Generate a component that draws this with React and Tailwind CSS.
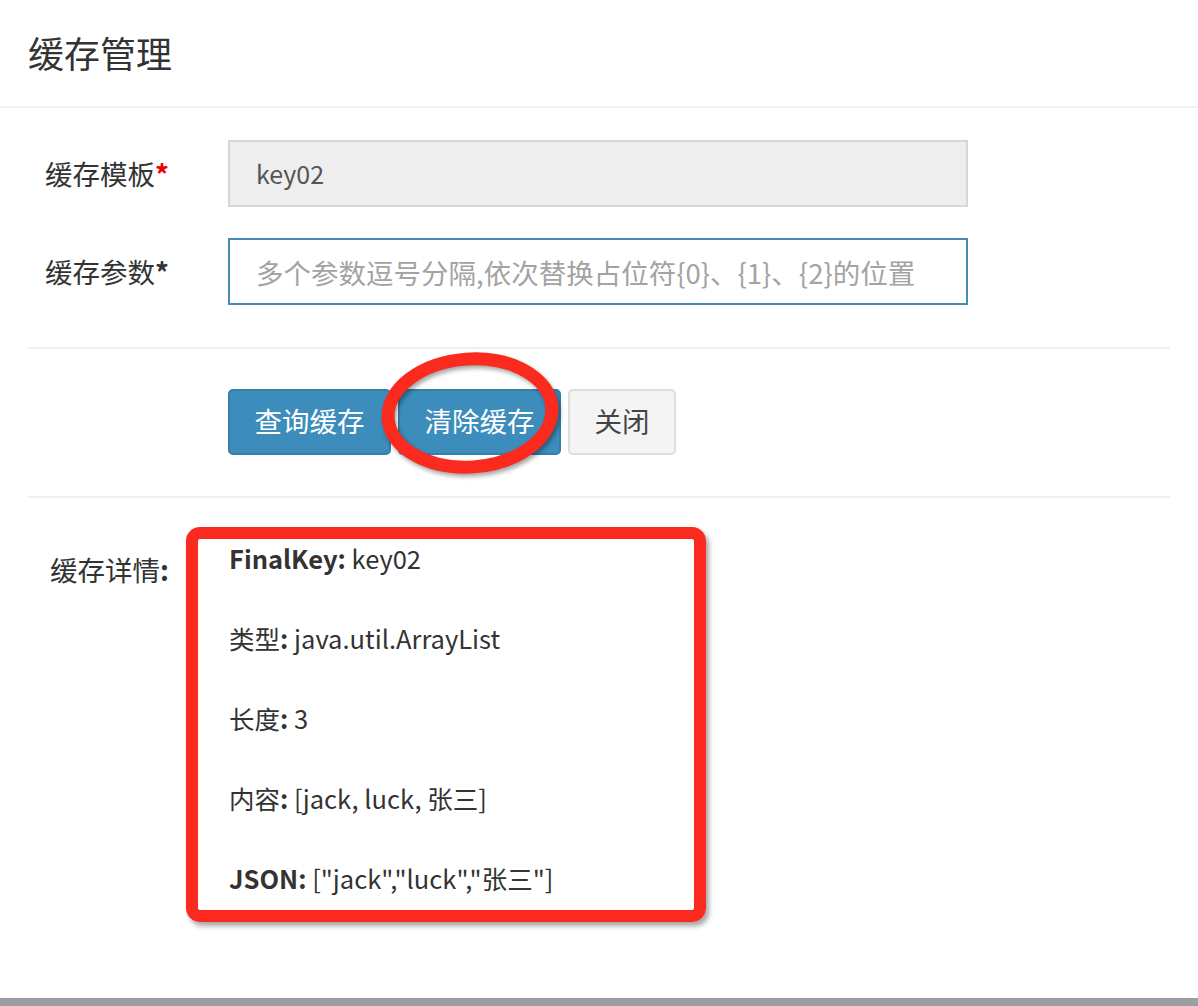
import React from 'react';

const font = { fontFamily: '"Noto Sans CJK SC", "Noto Sans", sans-serif' };

function FormRow({ label, star, children }) {
  return (
    <div className="flex items-center">
      <label className="w-[141px] text-right text-[27.5px] font-normal text-[#333] shrink-0">
        {label}
        <span className={star ? 'text-[#e00] font-bold' : 'text-[#333] font-bold'}>*</span>
      </label>
      <div className="ml-[59px]">{children}</div>
    </div>
  );
}

// CJK keys render at regular weight in the reference, only latin + colon are bold
function Detail({ k, v, cjk }) {
  return (
    <p className="text-[25.5px] leading-[37px] text-[#333]">
      <span className={cjk ? 'font-normal' : 'font-bold'}>{k}</span>
      <b className="font-bold">:</b> {v}
    </p>
  );
}

export default function App() {
  return (
    <div className="relative w-full min-h-[1006px] bg-white overflow-hidden" style={font}>
      {/* header */}
      <div className="h-[108px] border-b-2 border-[#f2f2f2] px-[28px] flex items-center">
        <h1 className="text-[36px] text-[#333] font-normal leading-none -mt-[2px]">缓存管理</h1>
      </div>

      <div className="px-[28px]">
        {/* inputs */}
        <div className="pt-[32px] flex flex-col gap-[31px]">
          <FormRow label="缓存模板" star>
            <div className="w-[740px] h-[67px] bg-[#eeeeee] border-2 border-[#d2d6de] flex items-center px-[26px] text-[25px] text-[#555]">
              key02
            </div>
          </FormRow>
          <FormRow label="缓存参数">
            <input
              className="w-[740px] h-[67px] border-2 border-[#4a8bb5] px-[26px] text-[27.5px] text-[#555] placeholder:text-[#a3a3a3] outline-none"
              placeholder="多个参数逗号分隔,依次替换占位符{0}、{1}、{2}的位置"
            />
          </FormRow>
        </div>

        <div className="mt-[42px] border-t-2 border-[#f0f0f0]" />

        {/* buttons */}
        <div className="pt-[40px] pb-[41px] pl-[200px] flex gap-[7px]">
          <button className="w-[163px] h-[66px] rounded-[5px] bg-[#3c8dbc] border-2 border-[#367fa9] text-white text-[27.5px] leading-none pb-[3px]">
            查询缓存
          </button>
          <button className="w-[163px] h-[66px] rounded-[5px] bg-[#3c8dbc] border-2 border-[#367fa9] text-white text-[27.5px] leading-none pb-[3px]">
            清除缓存
          </button>
          <button className="w-[108px] h-[66px] rounded-[5px] bg-[#f4f4f4] border-2 border-[#dddddd] text-[#444] text-[27.5px] leading-none pb-[3px]">
            关闭
          </button>
        </div>

        <div className="border-t-2 border-[#f0f0f0]" />

        {/* details */}
        <div className="flex pt-[41px]">
          <div className="w-[141px] text-right text-[27.5px] text-[#333] shrink-0 pt-[10px]">
            缓存详情<b className="font-bold">:</b>
          </div>
          <div className="ml-[60px] flex flex-col gap-[43px]">
            <Detail k="FinalKey" v="key02" />
            <Detail k="类型" v="java.util.ArrayList" cjk />
            <Detail k="长度" v="3" cjk />
            <Detail k="内容" v="[jack, luck, 张三]" cjk />
            <Detail k="JSON" v='["jack","luck","张三"]' />
          </div>
        </div>
      </div>

      {/* annotation: ellipse round the clear button */}
      <svg
        className="absolute left-[370px] top-[343px] pointer-events-none"
        width="200"
        height="142"
        viewBox="0 0 200 142"
        style={{ filter: 'drop-shadow(2px 3px 2px rgba(0,0,0,0.35))' }}
      >
        <ellipse
          cx="100"
          cy="70"
          rx="82"
          ry="54"
          fill="none"
          stroke="#fb2a1e"
          strokeWidth="13"
          transform="rotate(-4 100 70)"
        />
      </svg>

      {/* annotation: box round the details */}
      <div className="absolute left-[186px] top-[527px] w-[520px] h-[395px] border-[12px] border-[#fb2a1e] rounded-[14px] shadow-[3px_4px_5px_rgba(0,0,0,0.35)] pointer-events-none" />

      {/* bottom bar */}
      <div className="absolute left-0 right-0 top-[998px] h-[8px] bg-[#9d9ea2]" />
    </div>
  );
}
